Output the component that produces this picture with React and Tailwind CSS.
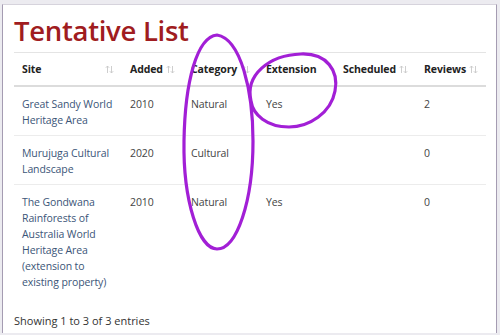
import React from 'react';

const rows = [
  { site: 'Great Sandy World Heritage Area', lines: ['Great Sandy World', 'Heritage Area'], added: '2010', category: 'Natural', ext: 'Yes', sched: '', reviews: '2' },
  { site: 'Murujuga Cultural Landscape', lines: ['Murujuga Cultural', 'Landscape'], added: '2020', category: 'Cultural', ext: '', sched: '', reviews: '0' },
  {
    site: 'The Gondwana Rainforests',
    lines: ['The Gondwana', 'Rainforests of', 'Australia World', 'Heritage Area', '(extension to', 'existing property)'],
    added: '2010', category: 'Natural', ext: 'Yes', sched: '', reviews: '0',
  },
];

function SortIcon() {
  return (
    <svg width="9" height="9" viewBox="0 0 9 9" className="shrink-0">
      <path d="M2.5 8V1M0.8 2.8L2.5 1L4.2 2.8" stroke="#c8c8c8" strokeWidth="0.9" fill="none" />
      <path d="M6.5 1V8M4.8 6.2L6.5 8L8.2 6.2" stroke="#c8c8c8" strokeWidth="0.9" fill="none" />
    </svg>
  );
}

const cols = [
  { label: 'Site', w: 'w-[108px]', sort: true },
  { label: 'Added', w: 'w-[61px]', sort: true },
  { label: 'Category', w: 'w-[75px]', sort: true },
  { label: 'Extension', w: 'w-[77px]', sort: false },
  { label: 'Scheduled', w: 'w-[81px]', sort: true },
  { label: 'Reviews', w: 'w-[70px]', sort: true },
];

export default function App() {
  return (
    <div className="w-[500px] h-[335px] bg-[#ecebf0] pt-[4px] pl-[2px] pr-[3px] overflow-hidden" style={{ fontFamily: '"Open Sans", sans-serif' }}>
      <div className="relative h-[329px] bg-white border-l border-r border-t border-l-[#a59cb2] border-r-[#a59cb2] border-t-[#d6d3dc] px-[11px]">
        <h1 className="text-[27.5px] leading-[36px] pt-[8px] text-[#a01c20] font-semibold tracking-[-0.3px]">Tentative List</h1>

        <table className="mt-[3px] w-[472px] border-t border-[#e4e4e4] text-[10.5px] tracking-[-0.1px] leading-[16px] border-collapse table-fixed">
          <thead>
            <tr className="border-b-2 border-[#dcdcdc]">
              {cols.map((c) => (
                <th key={c.label} className={`${c.w} text-left font-bold text-[#222] px-[8px] py-[8px]`}>
                  <div className="flex items-center justify-between">
                    <span>{c.label}</span>
                    {c.sort && <SortIcon />}
                  </div>
                </th>
              ))}
            </tr>
          </thead>
          <tbody className="text-[#444]">
            {rows.map((r, i) => (
              <tr key={r.site} className={i < rows.length - 1 ? 'border-b border-[#ececec]' : ''}>
                <td className="align-top px-[8px] pt-[9px] pb-[7px] text-[#3b5578] whitespace-nowrap">
                  {r.lines.map((l) => (
                    <div key={l}>{l}</div>
                  ))}
                </td>
                <td className="align-top px-[8px] pt-[9px] pb-[7px]">{r.added}</td>
                <td className="align-top px-[8px] pt-[9px] pb-[7px]">{r.category}</td>
                <td className="align-top px-[8px] pt-[9px] pb-[7px]">{r.ext}</td>
                <td className="align-top px-[8px] pt-[9px] pb-[7px]">{r.sched}</td>
                <td className="align-top px-[8px] pt-[9px] pb-[7px]">{r.reviews}</td>
              </tr>
            ))}
          </tbody>
        </table>

        <p className="mt-[16px] text-[11px] text-[#333]">Showing 1 to 3 of 3 entries</p>

        {/* hand-drawn annotations */}
        <svg className="absolute left-[-2px] top-[-4px] pointer-events-none" width="500" height="335">
          <path
            d="M216 34 C196 36 184 80 183 140 C182 200 198 248 216 248 C236 248 252 200 252 140 C252 90 240 38 216 34 Z"
            fill="none" stroke="#a21fd6" strokeWidth="3.2" strokeLinecap="round"
          />
          <path
            d="M250 100 C244 74 268 54 300 53 C326 52 338 70 334 90 C330 112 308 126 288 126 C266 126 252 114 250 100 Z"
            fill="none" stroke="#a21fd6" strokeWidth="3.2" strokeLinecap="round"
          />
        </svg>
      </div>
    </div>
  );
}
